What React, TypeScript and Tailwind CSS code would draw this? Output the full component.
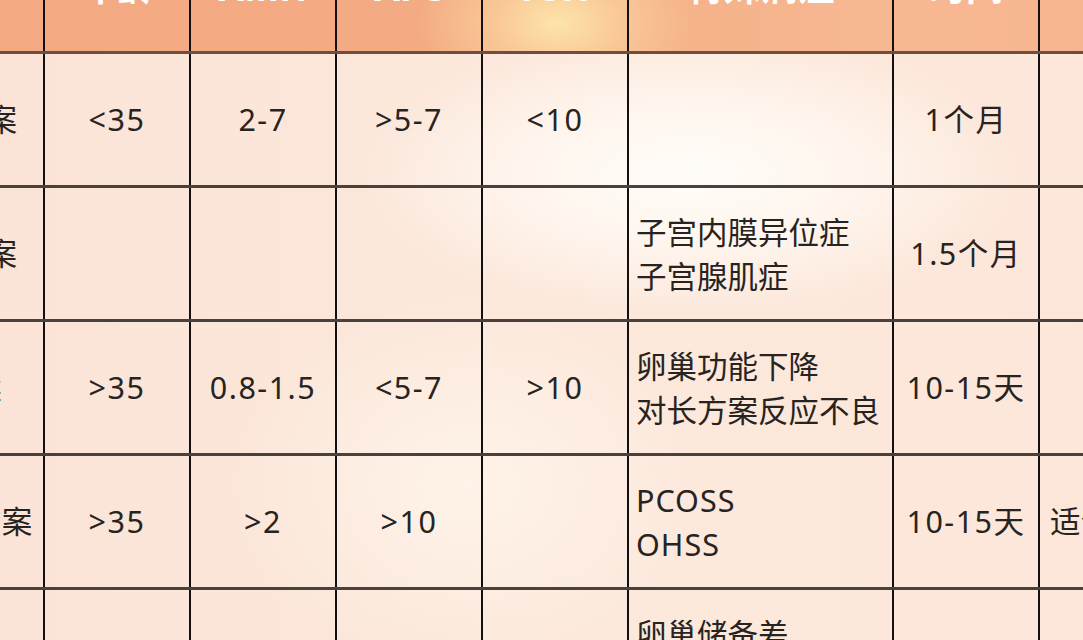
import React from 'react'

type Row = {
  name: string
  age: string
  amh: string
  afc: string
  fsh: string
  cond: string[]
  time: string
  note: string
}

const rows: Row[] = [
  {name: '长程方案', age: '<35', amh: '2-7', afc: '>5-7', fsh: '<10', cond: [], time: '1个月', note: ''},
  {name: '超长方案', age: '', amh: '', afc: '', fsh: '', cond: ['子宫内膜异位症', '子宫腺肌症'], time: '1.5个月', note: ''},
  {name: '短方案', age: '>35', amh: '0.8-1.5', afc: '<5-7', fsh: '>10', cond: ['卵巢功能下降', '对长方案反应不良'], time: '10-15天', note: ''},
  {name: '拮抗剂方案', age: '>35', amh: '>2', afc: '>10', fsh: '', cond: ['PCOSS', 'OHSS'], time: '10-15天', note: '适合高反应人群'},
  {name: '微刺激方案', age: '>40', amh: '<1', afc: '<5', fsh: '>10', cond: ['卵巢储备差', '高龄'], time: '5-10天', note: ''},
]

const headers = ['方案', '年龄', 'AMH', 'AFC', 'FSH', '特殊病症', '时间', '备注']

// column widths incl. the 2px right rule
const widths = ['w-[176px]', 'w-[146px]', 'w-[146px]', 'w-[146px]', 'w-[146px]', 'w-[265px]', 'w-[146px]', 'w-[300px]']

function Cell({i, children, left}: {i: number; children?: React.ReactNode; left?: boolean}) {
  return (
    <div
      className={`${widths[i]} shrink-0 border-r-2 border-[#121010] flex flex-col justify-center ${
        left ? 'items-start pl-[7px]' : 'items-center'
      }`}
    >
      {children}
    </div>
  )
}

// numbers in the source are set a little wider than Noto Sans
function Num({v}: {v: string}) {
  return <span className="tracking-[1.5px]">{v}</span>
}

export default function App() {
  return (
    <div className="w-[1083px] h-[640px] overflow-hidden bg-[#fce6d9] font-['Noto_Sans','Noto_Sans_CJK_SC',sans-serif]">
      <div className="-ml-[131px] -mt-[67px] w-max">
        {/* header */}
        <div className="flex h-[121px] border-b-[3px] border-[#6e4f3f] bg-[radial-gradient(ellipse_140px_90px_at_688px_90px,#fde4a9_0%,rgba(252,214,160,0.65)_45%,transparent_100%),linear-gradient(90deg,#f4aa82_0%,#f3ab84_40%,#f7b891_70%,#f6b18a_100%)] text-white text-[37px] font-bold">
          {headers.map((h, i) => (
            <Cell key={h} i={i}>
              <span className="leading-none pb-[12px]">{h}</span>
            </Cell>
          ))}
        </div>

        {/* body */}
        <div className="bg-[radial-gradient(ellipse_330px_140px_at_820px_120px,#fffcf8_0%,rgba(255,249,242,0.85)_45%,transparent_100%),radial-gradient(ellipse_240px_190px_at_600px_430px,rgba(255,246,236,0.8)_0%,transparent_100%),linear-gradient(90deg,#fbe3d6_0%,#fce8dc_50%,#fce6d9_100%)] text-[#272321] text-[30.5px]">
          {rows.map((r) => (
            <div key={r.name} className="flex h-[134px] border-b-[3px] border-[#4a413c]">
              <Cell i={0}>{r.name}</Cell>
              <Cell i={1}><Num v={r.age} /></Cell>
              <Cell i={2}><Num v={r.amh} /></Cell>
              <Cell i={3}><Num v={r.afc} /></Cell>
              <Cell i={4}><Num v={r.fsh} /></Cell>
              <Cell i={5} left>
                {r.cond.map((c) => (
                  <div key={c} className={`leading-[44px] ${/^[A-Z]/.test(c) ? 'tracking-[1px]' : ''}`}>
                    {c}
                  </div>
                ))}
              </Cell>
              <Cell i={6}><Num v={r.time} /></Cell>
              <Cell i={7} left>
                <span className="pl-[3px]">{r.note}</span>
              </Cell>
            </div>
          ))}
        </div>
      </div>
    </div>
  )
}
